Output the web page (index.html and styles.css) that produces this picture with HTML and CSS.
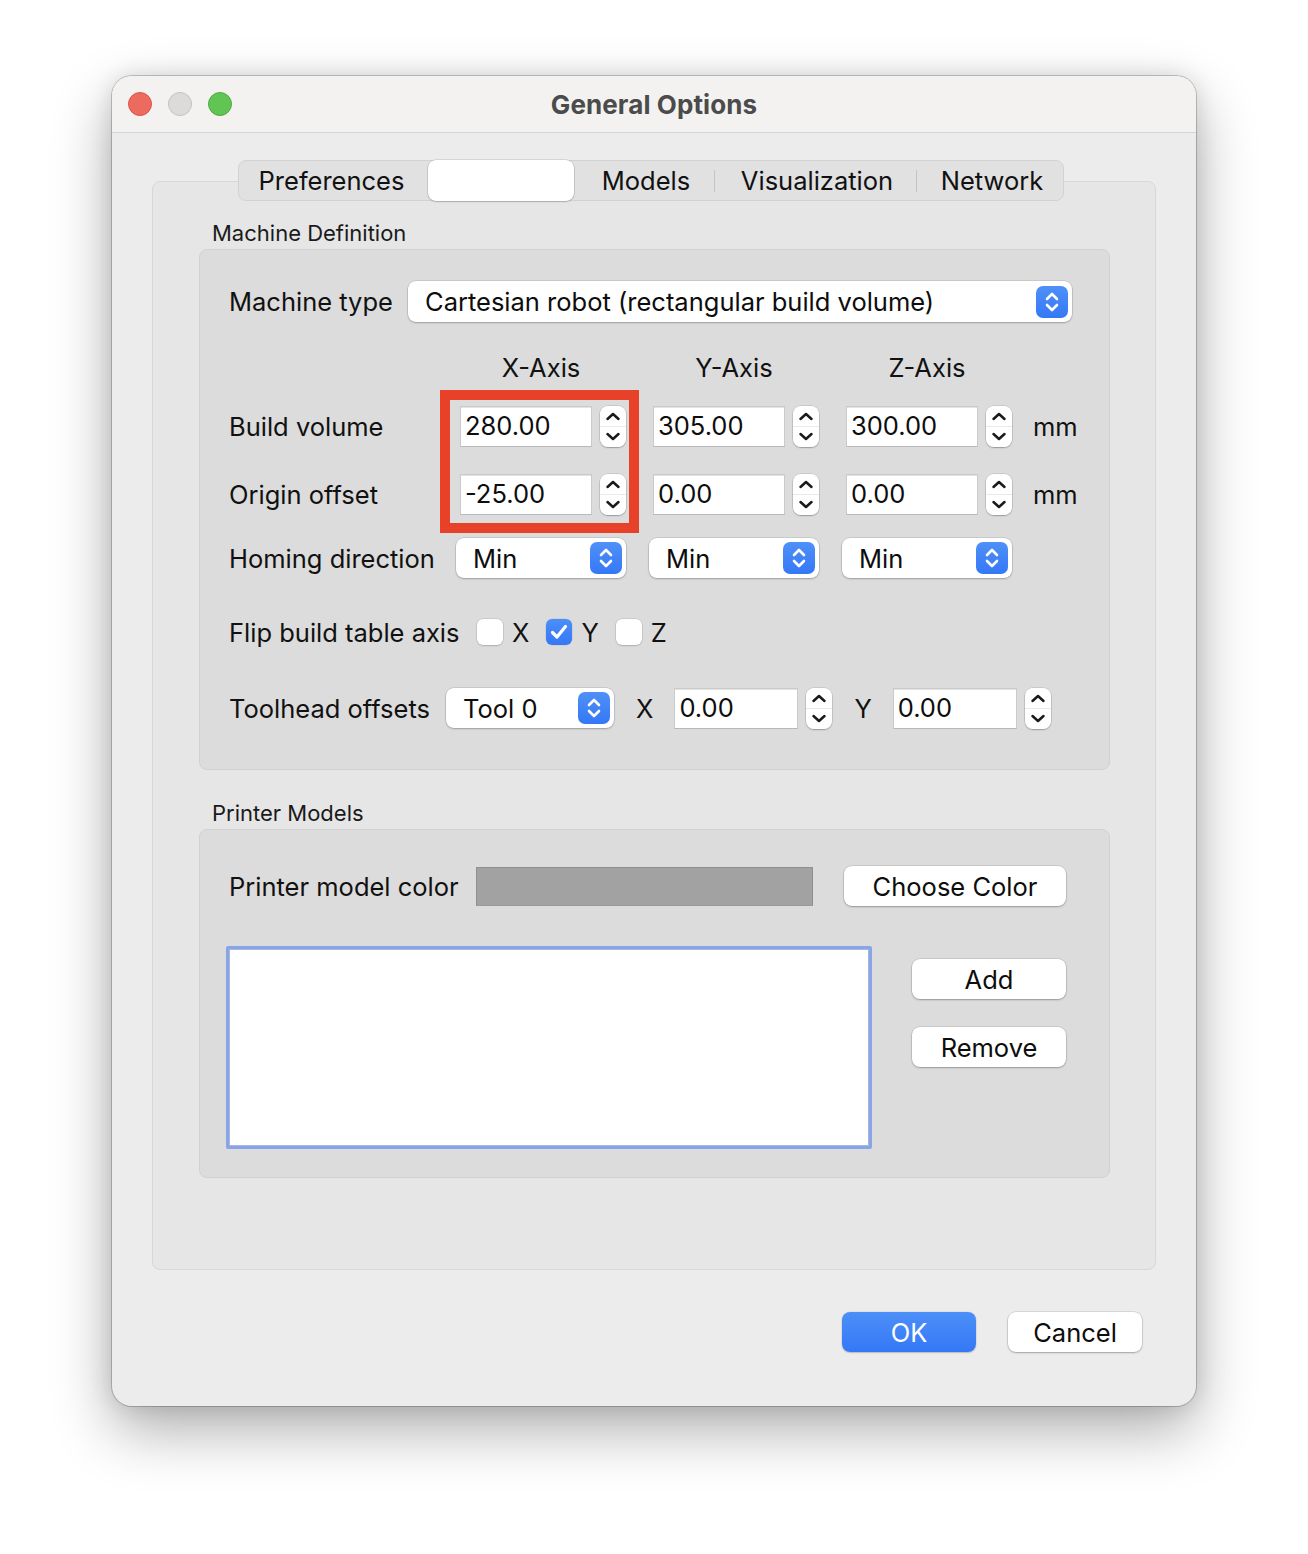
FILE: index.html
```html
<!DOCTYPE html>
<html>
<head>
<meta charset="utf-8">
<title>General Options</title>
<link rel="stylesheet" href="styles.css">
</head>
<body>
<div class="window">
  <div class="titlebar">
    <div class="lights">
      <span class="light red"></span><span class="light gray"></span><span class="light green"></span>
    </div>
    <div class="title">General Options</div>
    <div></div>
  </div>
  <div class="content">
    <div class="tabbar-wrap">
      <div class="tabbar">
        <div class="tab t-pref">Preferences</div>
        <div class="tab t-sel"></div>
        <div class="tab t-models">Models</div>
        <div class="sep"></div>
        <div class="tab t-vis">Visualization</div>
        <div class="sep"></div>
        <div class="tab t-net">Network</div>
      </div>
    </div>
    <div class="pane">
      <div class="group-label">Machine Definition</div>
      <div class="group g-machine">
        <div class="row r-type">
          <div class="lbl lbl-type">Machine type</div>
          <div class="select select-wide">
            <span class="select-text">Cartesian robot (rectangular build volume)</span>
            <svg class="sel-icon" width="32" height="32" viewBox="0 0 32 32"><defs><linearGradient id="bg1" x1="0" y1="0" x2="0" y2="1"><stop offset="0" stop-color="#4f90f8"/><stop offset="1" stop-color="#3478f6"/></linearGradient></defs><rect width="32" height="32" rx="7" fill="url(#bg1)"/><path d="M11 13 L16 8 L21 13 M11 19 L16 24 L21 19" fill="none" stroke="#fff" stroke-width="2.6" stroke-linecap="round" stroke-linejoin="round"/></svg>
          </div>
        </div>

        <div class="axes">
          <div class="axis-row r-head">
            <div class="lbl lbl-axis"></div>
            <div class="cell head">X-Axis</div>
            <div class="cell head">Y-Axis</div>
            <div class="cell head">Z-Axis</div>
          </div>
          <div class="axis-row r-build">
            <div class="lbl lbl-axis">Build volume</div>
            <div class="cell"><div class="field">280.00</div><div class="stepper"><svg width="26" height="41" viewBox="0 0 26 41"><path d="M7.5 13 L13 8 L18.5 13 M7.5 28 L13 33 L18.5 28" fill="none" stroke="#1a1a1a" stroke-width="2.5" stroke-linecap="round" stroke-linejoin="round"/></svg></div></div>
            <div class="cell"><div class="field">305.00</div><div class="stepper"><svg width="26" height="41" viewBox="0 0 26 41"><path d="M7.5 13 L13 8 L18.5 13 M7.5 28 L13 33 L18.5 28" fill="none" stroke="#1a1a1a" stroke-width="2.5" stroke-linecap="round" stroke-linejoin="round"/></svg></div></div>
            <div class="cell"><div class="field">300.00</div><div class="stepper"><svg width="26" height="41" viewBox="0 0 26 41"><path d="M7.5 13 L13 8 L18.5 13 M7.5 28 L13 33 L18.5 28" fill="none" stroke="#1a1a1a" stroke-width="2.5" stroke-linecap="round" stroke-linejoin="round"/></svg></div></div>
            <div class="unit">mm</div>
          </div>
          <div class="axis-row r-origin">
            <div class="lbl lbl-axis">Origin offset</div>
            <div class="cell"><div class="field">-25.00</div><div class="stepper"><svg width="26" height="41" viewBox="0 0 26 41"><path d="M7.5 13 L13 8 L18.5 13 M7.5 28 L13 33 L18.5 28" fill="none" stroke="#1a1a1a" stroke-width="2.5" stroke-linecap="round" stroke-linejoin="round"/></svg></div></div>
            <div class="cell"><div class="field">0.00</div><div class="stepper"><svg width="26" height="41" viewBox="0 0 26 41"><path d="M7.5 13 L13 8 L18.5 13 M7.5 28 L13 33 L18.5 28" fill="none" stroke="#1a1a1a" stroke-width="2.5" stroke-linecap="round" stroke-linejoin="round"/></svg></div></div>
            <div class="cell"><div class="field">0.00</div><div class="stepper"><svg width="26" height="41" viewBox="0 0 26 41"><path d="M7.5 13 L13 8 L18.5 13 M7.5 28 L13 33 L18.5 28" fill="none" stroke="#1a1a1a" stroke-width="2.5" stroke-linecap="round" stroke-linejoin="round"/></svg></div></div>
            <div class="unit">mm</div>
          </div>
          <div class="axis-row r-homing">
            <div class="lbl lbl-axis">Homing direction</div>
            <div class="cell"><div class="select select-cell"><span class="select-text">Min</span><svg class="sel-icon" width="32" height="32" viewBox="0 0 32 32"><rect width="32" height="32" rx="7" fill="url(#bg1)"/><path d="M11 13 L16 8 L21 13 M11 19 L16 24 L21 19" fill="none" stroke="#fff" stroke-width="2.6" stroke-linecap="round" stroke-linejoin="round"/></svg></div></div>
            <div class="cell"><div class="select select-cell"><span class="select-text">Min</span><svg class="sel-icon" width="32" height="32" viewBox="0 0 32 32"><rect width="32" height="32" rx="7" fill="url(#bg1)"/><path d="M11 13 L16 8 L21 13 M11 19 L16 24 L21 19" fill="none" stroke="#fff" stroke-width="2.6" stroke-linecap="round" stroke-linejoin="round"/></svg></div></div>
            <div class="cell"><div class="select select-cell"><span class="select-text">Min</span><svg class="sel-icon" width="32" height="32" viewBox="0 0 32 32"><rect width="32" height="32" rx="7" fill="url(#bg1)"/><path d="M11 13 L16 8 L21 13 M11 19 L16 24 L21 19" fill="none" stroke="#fff" stroke-width="2.6" stroke-linecap="round" stroke-linejoin="round"/></svg></div></div>
          </div>
          <div class="highlight"></div>
        </div>

        <div class="row r-flip">
          <div class="lbl lbl-flip">Flip build table axis</div>
          <span class="check"></span><span class="chk-lbl">X</span>
          <span class="check checked"><svg width="26" height="26" viewBox="0 0 26 26"><path d="M6.5 13.5 L11 18 L19.5 7.5" fill="none" stroke="#fff" stroke-width="3.2" stroke-linecap="round" stroke-linejoin="round"/></svg></span><span class="chk-lbl">Y</span>
          <span class="check"></span><span class="chk-lbl">Z</span>
        </div>

        <div class="row r-tool">
          <div class="lbl lbl-tool">Toolhead offsets</div>
          <div class="select select-tool"><span class="select-text">Tool 0</span><svg class="sel-icon" width="32" height="32" viewBox="0 0 32 32"><rect width="32" height="32" rx="7" fill="url(#bg1)"/><path d="M11 13 L16 8 L21 13 M11 19 L16 24 L21 19" fill="none" stroke="#fff" stroke-width="2.6" stroke-linecap="round" stroke-linejoin="round"/></svg></div>
          <span class="axis-lbl">X</span>
          <div class="field field-tool">0.00</div><div class="stepper"><svg width="26" height="41" viewBox="0 0 26 41"><path d="M7.5 13 L13 8 L18.5 13 M7.5 28 L13 33 L18.5 28" fill="none" stroke="#1a1a1a" stroke-width="2.5" stroke-linecap="round" stroke-linejoin="round"/></svg></div>
          <span class="axis-lbl">Y</span>
          <div class="field field-tool">0.00</div><div class="stepper"><svg width="26" height="41" viewBox="0 0 26 41"><path d="M7.5 13 L13 8 L18.5 13 M7.5 28 L13 33 L18.5 28" fill="none" stroke="#1a1a1a" stroke-width="2.5" stroke-linecap="round" stroke-linejoin="round"/></svg></div>
        </div>
      </div>

      <div class="group-label gl-models">Printer Models</div>
      <div class="group g-models">
        <div class="row r-color">
          <div class="lbl lbl-color">Printer model color</div>
          <div class="swatch"></div>
          <button class="btn btn-choose">Choose Color</button>
        </div>
        <div class="row r-list">
          <div class="listbox"></div>
          <div class="list-btns">
            <button class="btn btn-side btn-add">Add</button>
            <button class="btn btn-side btn-remove">Remove</button>
          </div>
        </div>
      </div>
    </div>
    <div class="footer">
      <button class="btn btn-foot primary">OK</button>
      <button class="btn btn-foot">Cancel</button>
    </div>
  </div>
</div>
</body>
</html>
```

FILE: styles.css
```css
html, body {
  margin: 0;
  padding: 0;
  background: #ffffff;
}

body {
  font-family: Inter, "Noto Sans", "Liberation Sans", sans-serif;
  color: #111111;
  width: 1308px;
  height: 1554px;
  overflow: hidden;
}

.window {
  margin: 76px 0 0 112px;
  width: 1084px;
  height: 1330px;
  box-sizing: border-box;
  border-radius: 20px;
  background: #ececec;
  box-shadow: 0 0 0 1px rgba(0, 0, 0, 0.2), 0 24px 60px rgba(0, 0, 0, 0.32), 0 0 22px rgba(0, 0, 0, 0.12);
  overflow: hidden;
  display: flex;
  flex-direction: column;
}

.titlebar {
  height: 56px;
  flex: none;
  background: #f3f2f1;
  border-bottom: 1px solid #d6d5d4;
  display: grid;
  grid-template-columns: 1fr auto 1fr;
  align-items: center;
  padding: 0 16px;
}

.lights {
  display: flex;
  gap: 16px;
}

.light {
  width: 24px;
  height: 24px;
  border-radius: 50%;
  box-sizing: border-box;
}

.light.red { background: #ec6a5e; border: 1px solid #d8574c; }
.light.gray { background: #dcdbda; border: 1px solid #c3c2c1; }
.light.green { background: #61c554; border: 1px solid #52a843; }

.title {
  font-size: 26px;
  font-weight: 700;
  color: #4b4b4b;
  letter-spacing: 0.1px;
}

.content {
  flex: 1;
  padding: 27px 40px 0 40px;
  display: flex;
  flex-direction: column;
}

.tabbar-wrap {
  display: flex;
  justify-content: center;
  padding-right: 6px;
  position: relative;
  z-index: 1;
}

.tabbar {
  display: flex;
  align-items: center;
  height: 41px;
  box-sizing: border-box;
  background: #e1e1e1;
  border: 1px solid #d2d2d2;
  border-radius: 8px;
}

.tab {
  height: 39px;
  display: flex;
  align-items: center;
  justify-content: center;
  font-size: 25.5px;
  color: #111;
}

.t-pref { width: 185px; padding-right: 4px; }
.t-sel {
  width: 146px;
  height: 41px;
  background: #ffffff;
  border-radius: 8px;
  box-shadow: 0 0 0 0.5px rgba(0, 0, 0, 0.18), 0 1px 1.5px rgba(0, 0, 0, 0.18);
}
.t-models { width: 140px; padding-left: 4px; box-sizing: border-box; }
.t-vis { width: 201px; padding-left: 3px; box-sizing: border-box; }
.t-net { width: 146px; padding-left: 4px; box-sizing: border-box; }

.sep {
  width: 1px;
  height: 22px;
  background: #c4c4c4;
}

.pane {
  margin-top: -20px;
  height: 1089px;
  box-sizing: border-box;
  background: #e6e6e6;
  border: 1px solid #d7d7d7;
  border-radius: 8px;
  padding: 36px 45px 0 46px;
}

.group-label {
  font-size: 22px;
  line-height: 30px;
  height: 30px;
  padding-left: 13px;
  margin-bottom: 1px;
  color: #1a1a1a;
}

.gl-models {
  margin-top: 28px;
}

.group {
  background: #dcdcdc;
  border: 1px solid #d1d1d1;
  border-radius: 8px;
  box-sizing: border-box;
}

.g-machine {
  height: 521px;
  padding: 31px 37px 0 29px;
}

.g-models {
  height: 349px;
  padding: 35px 43px 0 29px;
}

.row {
  display: flex;
  align-items: center;
}

.lbl {
  font-size: 25.5px;
  flex: none;
  white-space: nowrap;
}

.r-type { height: 41px; }
.lbl-type { width: 179px; }

.select {
  background: #ffffff;
  border-radius: 8px;
  box-shadow: 0 0 0 0.5px rgba(0, 0, 0, 0.16), 0 1px 2px rgba(0, 0, 0, 0.22);
  display: flex;
  align-items: center;
  justify-content: space-between;
  box-sizing: border-box;
  padding: 0 4px 0 17px;
}

.select-text {
  font-size: 25.5px;
  color: #0d0d0d;
  white-space: nowrap;
}

.sel-icon { flex: none; display: block; }

.select-wide {
  flex: 1;
  height: 41px;
}

.select-cell {
  width: 170px;
  height: 40px;
}

.select-tool {
  width: 168px;
  height: 40px;
}

.axes {
  position: relative;
  margin-top: 30px;
}

.axis-row {
  display: flex;
  align-items: center;
  gap: 23px;
}

.lbl-axis {
  width: 204px;
}

.cell {
  width: 170px;
  flex: none;
  display: flex;
  align-items: center;
}

.head {
  justify-content: center;
  font-size: 25.5px;
  height: 30px;
}

.r-build { height: 41px; margin-top: 24px; }
.r-origin { height: 41px; margin-top: 27px; }
.r-homing { height: 40px; margin-top: 23px; }

.field {
  width: 132px;
  height: 41px;
  margin-left: 4px;
  box-sizing: border-box;
  background: #ffffff;
  border: 1px solid #cacaca;
  border-bottom-color: #b9b9b9;
  box-shadow: inset 0 1px 0 #e4e4e4;
  font-size: 25.5px;
  line-height: 38px;
  padding-left: 4px;
  color: #0d0d0d;
  flex: none;
}

.stepper {
  width: 26px;
  height: 41px;
  margin-left: 8px;
  flex: none;
  background: linear-gradient(#ffffff 0 49%, #e9e9e9 49% 51%, #ffffff 51% 100%);
  border-radius: 8px;
  box-shadow: 0 0 0 0.5px rgba(0, 0, 0, 0.16), 0 1px 1.5px rgba(0, 0, 0, 0.25);
}

.stepper svg { display: block; }

.unit {
  font-size: 25.5px;
  margin-left: -2px;
}

.highlight {
  position: absolute;
  left: 211px;
  top: 38px;
  width: 199px;
  height: 143px;
  box-sizing: border-box;
  border: 10px solid #e8412a;
  pointer-events: none;
}

.r-flip {
  height: 40px;
  margin-top: 34px;
}

.lbl-flip { width: 248px; }

.check {
  width: 26px;
  height: 26px;
  flex: none;
  box-sizing: border-box;
  border-radius: 6px;
  background: #ffffff;
  box-shadow: 0 0 0 0.5px rgba(0, 0, 0, 0.14), 0 1px 1.5px rgba(0, 0, 0, 0.15);
}

.check.checked {
  background: linear-gradient(#4c8ef8, #3478f6);
  box-shadow: 0 0 0 0.5px rgba(0, 0, 0, 0.1);
}

.check svg { display: block; }

.chk-lbl {
  font-size: 25.5px;
  margin-left: 9px;
  margin-right: 17px;
}

.r-tool {
  height: 40px;
  margin-top: 36px;
}

.lbl-tool { width: 217px; }

.axis-lbl {
  font-size: 25.5px;
  margin-left: 22px;
  margin-right: 21px;
}

.field-tool {
  width: 124px;
  margin-left: 0;
}

.swatch {
  width: 337px;
  height: 39px;
  box-sizing: border-box;
  background: #a2a2a2;
  border: 1px solid #909090;
  border-bottom-color: #9a9a9a;
  flex: none;
}

.r-color { height: 42px; }
.lbl-color { width: 247px; }

.btn {
  font-family: inherit;
  font-size: 25.5px;
  color: #0d0d0d;
  background: #ffffff;
  border: none;
  border-radius: 8px;
  box-shadow: 0 0 0 0.5px rgba(0, 0, 0, 0.16), 0 1px 2px rgba(0, 0, 0, 0.25);
  height: 40px;
  padding: 0;
  margin: 0;
  flex: none;
}

.btn-choose {
  width: 222px;
  margin-left: 31px;
}

.r-list {
  align-items: flex-start;
  margin-top: 39px;
}

.listbox {
  width: 646px;
  height: 203px;
  margin-left: -3px;
  box-sizing: border-box;
  background: #ffffff;
  border: 3px solid #87a5e8;
  border-radius: 2px;
  box-shadow: inset 0 0 0 1px #a9b7d6;
  flex: none;
}

.list-btns {
  display: flex;
  flex-direction: column;
  margin-left: 40px;
  padding-top: 13px;
  gap: 28px;
}

.btn-side { width: 154px; }

.footer {
  display: flex;
  justify-content: flex-end;
  gap: 32px;
  padding: 42px 14px 0 0;
}

.btn-foot { width: 134px; }

.btn.primary {
  background: linear-gradient(#4d8ff8, #3478f6);
  color: #ffffff;
  box-shadow: 0 0 0 0.5px rgba(0, 0, 0, 0.08), 0 1px 1.5px rgba(0, 0, 0, 0.18);
}
```
